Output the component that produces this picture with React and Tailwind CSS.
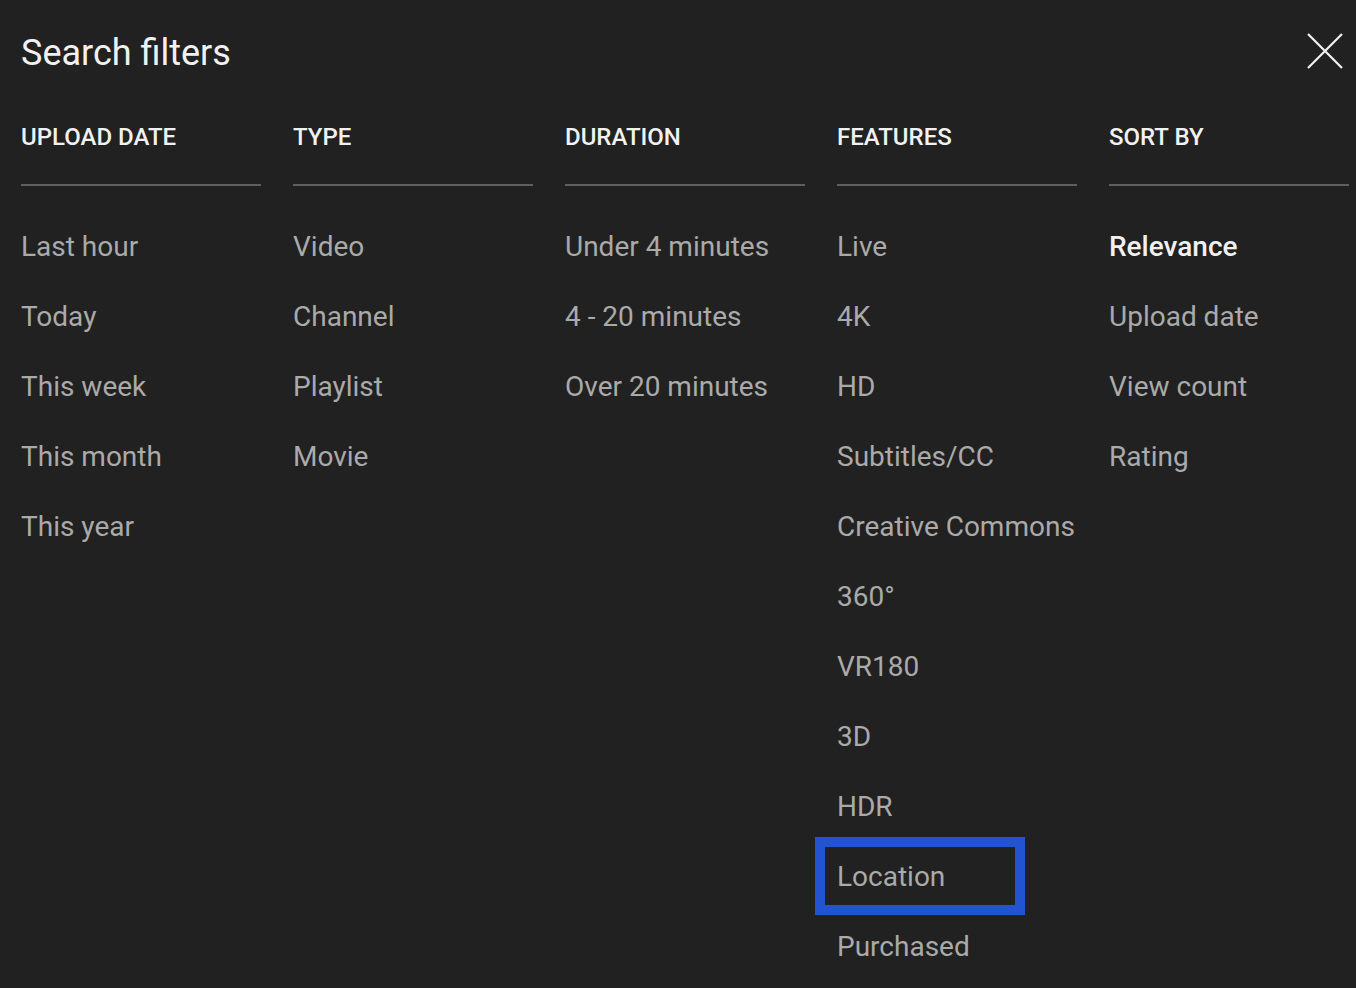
const columns = [
  { title: 'UPLOAD DATE', items: ['Last hour', 'Today', 'This week', 'This month', 'This year'] },
  { title: 'TYPE', items: ['Video', 'Channel', 'Playlist', 'Movie'] },
  { title: 'DURATION', items: ['Under 4 minutes', '4 - 20 minutes', 'Over 20 minutes'] },
  {
    title: 'FEATURES',
    items: ['Live', '4K', 'HD', 'Subtitles/CC', 'Creative Commons', '360°', 'VR180', '3D', 'HDR', 'Location', 'Purchased'],
  },
  { title: 'SORT BY', items: ['Relevance', 'Upload date', 'View count', 'Rating'] },
];

function CloseIcon() {
  return (
    <svg width="36" height="36" viewBox="0 0 36 36" className="block">
      <path d="M1 1 L35 35 M35 1 L1 35" stroke="#f1f1f1" strokeWidth="2.2" fill="none" />
    </svg>
  );
}

export default function App() {
  return (
    <div className="h-[988px] w-full overflow-hidden bg-[#212121] pl-[21px] font-['Roboto',sans-serif]">
      <div className="flex h-[104px] items-center justify-between pt-[2px]">
        <h1 className="text-[36px] font-normal text-[#f1f1f1]">Search filters</h1>
        <button className="mr-[13px] mt-[-4px]">
          <CloseIcon />
        </button>
      </div>

      <div className="flex gap-[32px]">
        {columns.map((col) => (
          <div key={col.title} className="w-[240px] shrink-0">
            <div className="h-[82px] border-b-2 border-[#5f5f5f]">
              <p className="text-[24px] leading-[66px] font-medium text-[#f1f1f1]">{col.title}</p>
            </div>
            <ul className="pt-[26px]">
              {col.items.map((item) => {
                const active = item === 'Relevance';
                return (
                  <li key={item} className="relative h-[70px] leading-[70px]">
                    <span className={active ? 'text-[28px] font-medium text-[#f1f1f1]' : 'text-[28px] text-[#aaaaaa]'}>
                      {item}
                    </span>
                    {item === 'Location' && (
                      <span className="absolute left-[-22px] top-[-5px] h-[78px] w-[210px] border-[10px] border-[#2254d1]" />
                    )}
                  </li>
                );
              })}
            </ul>
          </div>
        ))}
      </div>
    </div>
  );
}
